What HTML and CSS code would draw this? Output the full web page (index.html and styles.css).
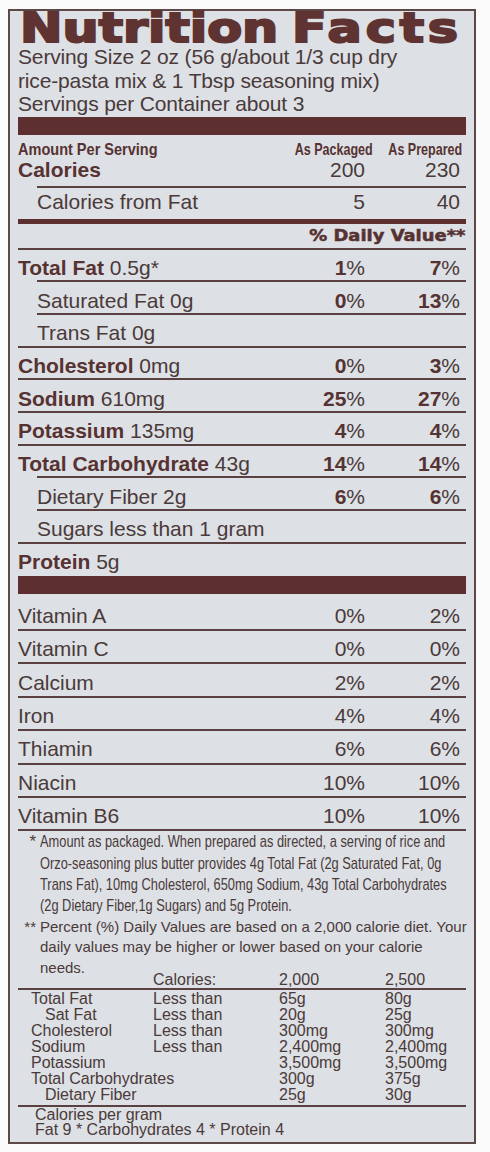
FILE: index.html
```html
<!DOCTYPE html>
<html lang="en">
<head>
    <meta charset="UTF-8">
    <meta name="viewport" content="width=device-width, initial-scale=1.0">
    <title>Nutrition Facts</title>
    <link rel="stylesheet" href="styles.css">
</head>
<body>

    <!-- 营养成分表 -->
    <div class="label">
        <h1 class="title"><span>Nutrition <span class="wide">Facts</span></span></h1>
        <p class="serving">Serving Size 2 oz (56 g/about 1/3 cup dry<br>rice-pasta mix &amp; 1 Tbsp seasoning mix)<br>Servings per Container about 3</p>

        <div class="bar"></div>

        <div class="head-row">
            <span class="name"><span>Amount Per Serving</span></span>
            <span class="col"><span>As Packaged</span></span>
            <span class="col"><span>As Prepared</span></span>
        </div>
        <div class="cal-row">
            <b class="name">Calories</b>
            <span class="col">200</span>
            <span class="col">230</span>
        </div>
        <div class="cal-fat sub">
            <span class="name">Calories from Fat</span>
            <span class="col">5</span>
            <span class="col">40</span>
        </div>

        <div class="dv"><span>% Daily Value**</span></div>

        <div class="row"><span class="name"><b>Total Fat</b> 0.5g*</span><span class="col"><b>1</b>%</span><span class="col"><b>7</b>%</span></div>
        <div class="row sub"><span class="name">Saturated Fat 0g</span><span class="col"><b>0</b>%</span><span class="col"><b>13</b>%</span></div>
        <div class="row sub"><span class="name">Trans Fat 0g</span></div>
        <div class="row"><span class="name"><b>Cholesterol</b> 0mg</span><span class="col"><b>0</b>%</span><span class="col"><b>3</b>%</span></div>
        <div class="row"><span class="name"><b>Sodium</b> 610mg</span><span class="col"><b>25</b>%</span><span class="col"><b>27</b>%</span></div>
        <div class="row"><span class="name"><b>Potassium</b> 135mg</span><span class="col"><b>4</b>%</span><span class="col"><b>4</b>%</span></div>
        <div class="row"><span class="name"><b>Total Carbohydrate</b> 43g</span><span class="col"><b>14</b>%</span><span class="col"><b>14</b>%</span></div>
        <div class="row sub"><span class="name">Dietary Fiber 2g</span><span class="col"><b>6</b>%</span><span class="col"><b>6</b>%</span></div>
        <div class="row sub"><span class="name">Sugars less than 1 gram</span></div>
        <div class="row"><span class="name"><b>Protein</b> 5g</span></div>

        <div class="bar"></div>

        <div class="vitamins">
            <div class="row"><span class="name">Vitamin A</span><span class="col">0%</span><span class="col">2%</span></div>
            <div class="row"><span class="name">Vitamin C</span><span class="col">0%</span><span class="col">0%</span></div>
            <div class="row"><span class="name">Calcium</span><span class="col">2%</span><span class="col">2%</span></div>
            <div class="row"><span class="name">Iron</span><span class="col">4%</span><span class="col">4%</span></div>
            <div class="row"><span class="name">Thiamin</span><span class="col">6%</span><span class="col">6%</span></div>
            <div class="row"><span class="name">Niacin</span><span class="col">10%</span><span class="col">10%</span></div>
            <div class="row"><span class="name">Vitamin B6</span><span class="col">10%</span><span class="col">10%</span></div>
        </div>

        <!-- 脚注 -->
        <div class="notes">
            <div class="note note-pkg">
                <span class="mark">*</span>
                <p>Amount as packaged. When prepared as directed, a serving of rice and<br>Orzo-seasoning plus butter provides 4g Total Fat (2g Saturated Fat, 0g<br>Trans Fat), 10mg Cholesterol, 650mg Sodium, 43g Total Carbohydrates<br>(2g Dietary Fiber,1g Sugars) and 5g Protein.</p>
            </div>
            <div class="note note-dv">
                <span class="mark">**</span>
                <p>Percent (%) Daily Values are based on a 2,000 calorie diet. Your<br>daily values may be higher or lower based on your calorie<br>needs.</p>
            </div>

            <div class="dv-table">
                <div class="dv-head">
                    <span></span><span>Calories:</span><span>2,000</span><span>2,500</span>
                </div>
                <div class="dv-body">
                    <span>Total Fat</span><span>Less than</span><span>65g</span><span>80g</span>
                    <span class="indent">Sat Fat</span><span>Less than</span><span>20g</span><span>25g</span>
                    <span>Cholesterol</span><span>Less than</span><span>300mg</span><span>300mg</span>
                    <span>Sodium</span><span>Less than</span><span>2,400mg</span><span>2,400mg</span>
                    <span>Potassium</span><span></span><span>3,500mg</span><span>3,500mg</span>
                    <span>Total Carbohydrates</span><span></span><span>300g</span><span>375g</span>
                    <span class="indent">Dietary Fiber</span><span></span><span>25g</span><span>30g</span>
                </div>
            </div>

            <p class="per-gram">Calories per gram<br>Fat 9 * Carbohydrates 4 * Protein 4</p>
        </div>
    </div>

</body>
</html>
```

FILE: styles.css
```css
/* 重置默认样式 */
* {
    margin: 0;
    padding: 0;
    box-sizing: border-box;
}

body {
    background: #fbfbfb;
    padding: 9px 0 0 8px;
    font-family: 'Liberation Sans', Arial, sans-serif;
    color: #4a3a3a;
}

.label {
    width: 468px;
    height: 1135px;
    background: #dde0e4;
    border: 2px solid #5b4847;
    padding: 0 8px;
}

/* 标题 */
.title {
    font-family: 'DejaVu Sans', sans-serif;
    font-weight: bold;
    font-size: 40px;
    line-height: 34px;
    color: #5e3332;
    white-space: nowrap;
    word-spacing: -3px;
    -webkit-text-stroke: 2px #5e3332;
}

.title > span {
    display: inline-block;
    transform: scaleX(1.27);
    transform-origin: left;
    margin-left: 2px;
}

.title .wide {
    letter-spacing: 3px;
}

.serving {
    font-size: 21px;
    line-height: 23.5px;
    letter-spacing: -0.15px;
    padding-top: 0.2px;
}

.bar {
    height: 18.5px;
    background: #5d302f;
    margin-top: 1px;
}

.name {
    flex: 1;
    white-space: nowrap;
}

.col {
    width: 95px;
    text-align: right;
    white-space: nowrap;
}

b {
    color: #563232;
}

/* 表头 */
.head-row {
    display: flex;
    padding: 5.8px 6px 0 0;
    font-size: 16.5px;
    line-height: 17px;
    font-weight: bold;
    color: #563232;
}

.head-row span span {
    display: inline-block;
    transform-origin: left;
    transform: scaleX(0.88);
}

.head-row .col span {
    transform-origin: right;
    transform: scaleX(0.76);
}

.cal-row {
    display: flex;
    padding: 0.4px 6px 3.3px 0;
    font-size: 21px;
    line-height: 24px;
}

.cal-fat {
    display: flex;
    border-top: 2px solid #5a4040;
    padding: 2.7px 6px 4.3px 0;
    font-size: 21px;
    line-height: 24px;
}

.sub {
    margin-left: 19px;
}

.dv {
    border-top: 5px solid #5d302f;
    text-align: right;
    font-family: 'DejaVu Sans', sans-serif;
    font-weight: bold;
    font-size: 16px;
    line-height: 24px;
    color: #563232;
    padding-right: 1px;
    -webkit-text-stroke: 0.5px #563232;
}

.dv span {
    display: inline-block;
    transform: scaleX(1.12);
    transform-origin: right;
}

/* 营养素行 */
.row {
    display: flex;
    border-top: 2px solid #5a4040;
    padding: 6.3px 6px 0.4px 0;
    font-size: 21px;
    line-height: 24px;
}

.vitamins .row {
    padding: 6.1px 6px 1.3px 0;
}

.vitamins .row:first-child {
    border-top: none;
    padding-top: 9.7px;
}

/* 脚注 */
.notes {
    border-top: 2px solid #5a4040;
}

.note {
    display: flex;
    white-space: nowrap;
}

.mark {
    width: 22px;
    padding-right: 4px;
    text-align: right;
    flex: none;
}

.note-pkg {
    font-size: 17px;
    line-height: 21.3px;
}

.note-pkg p {
    width: 420px;
    transform: scaleX(0.755);
    transform-origin: left;
}

.note-dv {
    font-size: 15px;
    line-height: 20.5px;
}

.dv-table {
    margin-top: -5.6px;
    font-size: 16px;
    line-height: 16px;
    white-space: nowrap;
}

.dv-head,
.dv-body {
    display: grid;
    grid-template-columns: 122px 126px 106px 1fr;
    padding-left: 13px;
}

.dv-head {
    border-bottom: 2px solid #5a4040;
}

.dv-body {
    padding: 0.8px 0 2px 13px;
    border-bottom: 2px solid #5a4040;
}

.indent {
    padding-left: 14px;
}

.per-gram {
    font-size: 16px;
    line-height: 15px;
    padding: 0 0 0 17px;
}
```
